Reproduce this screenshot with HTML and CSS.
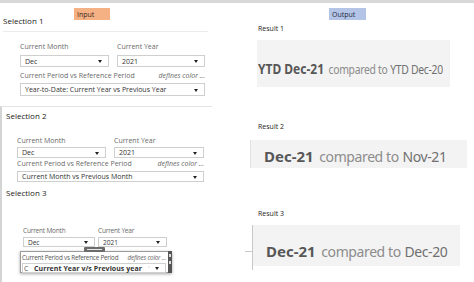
FILE: index.html
```html
<!DOCTYPE html>
<html>
<head>
<meta charset="utf-8">
<link rel="stylesheet" href="styles.css">
</head>
<body>
<div class="page">
  <div class="input-col">
    <div class="col-head"><span class="tag tag-input">Input</span></div>

    <div class="sel-title t1">Selection 1</div>
    <div class="rule-short"></div>
    <div class="fields f1">
      <div class="field">
        <div class="lbl">Current Month</div>
        <div class="dd"><span>Dec</span></div>
      </div>
      <div class="field">
        <div class="lbl">Current Year</div>
        <div class="dd"><span>2021</span></div>
      </div>
      <div class="field wide">
        <div class="lbl lbl-row"><span>Current Period vs Reference Period</span><em>defines color ...</em></div>
        <div class="dd"><span>Year-to-Date: Current Year vs Previous Year</span></div>
      </div>
    </div>

    <div class="lower">
      <div class="sel-title t2">Selection 2</div>
      <div class="fields f2">
        <div class="field">
          <div class="lbl">Current Month</div>
          <div class="dd"><span>Dec</span></div>
        </div>
        <div class="field">
          <div class="lbl">Current Year</div>
          <div class="dd"><span>2021</span></div>
        </div>
        <div class="field wide">
          <div class="lbl lbl-row"><span>Current Period vs Reference Period</span><em>defines color ...</em></div>
          <div class="dd"><span>Current Month vs Previous Month</span></div>
        </div>
      </div>

      <div class="sel-title t3">Selection 3</div>
      <div class="fields f3">
        <div class="field">
          <div class="lbl">Current Month</div>
          <div class="dd"><span>Dec</span></div>
        </div>
        <div class="field">
          <div class="lbl">Current Year</div>
          <div class="dd"><span>2021</span></div>
        </div>
      </div>
      <div class="handle"></div>
      <div class="popup">
        <div class="popup-main">
          <div class="lbl lbl-row pop-lbl"><span>Current Period vs Reference Period</span><em>defines color ...</em></div>
          <div class="dd pop-dd"><span class="cut">C</span><b>Current Year v/s Previous year</b><span class="tick">'</span></div>
        </div>
        <div class="popup-strip"><i></i><i></i></div>
      </div>
    </div>
  </div>

  <div class="output-col">
    <div class="col-head"><span class="tag tag-output">Output</span></div>

    <div class="res-lbl r1">Result 1</div>
    <div class="res-box b1"><span class="cond"><b>YTD Dec-21</b> <span class="lt">compared to</span> <span class="md">YTD Dec-20</span></span></div>

    <div class="res-lbl r2">Result 2</div>
    <div class="res-box b2"><b>Dec-21</b> <span class="lt">compared to</span> <span class="md">Nov-21</span></div>

    <div class="res-lbl r3">Result 3</div>
    <div class="res-box b3"><b>Dec-21</b> <span class="lt">compared to</span> <span class="md">Dec-20</span></div>
  </div>
</div>
</body>
</html>
```

FILE: styles.css
```css
* { box-sizing: border-box; }
html, body { margin: 0; padding: 0; }
body {
  width: 474px;
  height: 282px;
  overflow: hidden;
  background: linear-gradient(#d8d8d8 0 3px, #ffffff 3px);
  font-family: "Open Sans", "Noto Sans", sans-serif;
  color: #333;
}
.page { display: flex; }
.input-col { width: 237px; }
.output-col { flex: 1; min-width: 0; }

.col-head { height: 12px; }
.tag {
  display: inline-block;
  height: 12px;
  font-size: 7px;
  line-height: 13px;
  padding-left: 3px;
  color: #3a2a20;
}
.tag-input { margin-left: 74px; width: 36px; background: #f5b084; }
.tag-output { margin-left: 92px; width: 37px; background: #b3c4e6; color: #1d2a44; }

.sel-title {
  font-size: 8px;
  line-height: 12px;
  color: #222;
  padding-left: 3px;
}
.t1 { margin-top: 3px; }
.rule-short { margin: 4px 0 0 3px; width: 205px; height: 1px; background: #ececec; }

.fields {
  display: grid;
  grid-template-columns: 89px 88px;
  column-gap: 8px;
}
.field.wide { grid-column: 1 / 3; }
.lbl {
  font-size: 7px;
  line-height: 10px;
  color: #6a6a6a;
  white-space: nowrap;
}
.lbl-row { display: flex; justify-content: space-between; }
.lbl-row em { font-style: italic; color: #666; }
.dd {
  position: relative;
  border: 1px solid #cfcfcf;
  background: #fff;
  font-size: 7px;
  color: #333;
  padding-left: 4px;
  white-space: nowrap;
  display: flex;
  align-items: center;
}
.dd::after {
  content: "";
  position: absolute;
  right: 6px;
  top: 50%;
  margin-top: -1px;
  border-left: 2px solid transparent;
  border-right: 2px solid transparent;
  border-top: 3px solid #222;
}

.f1 { padding-left: 20px; margin-top: 10px; }
.f1 .dd { height: 12px; margin-top: 3px; }
.f1 .wide { margin-top: 4px; }
.f1 .wide .dd { height: 13px; margin-top: 2px; }

.lower {
  margin-top: 10px;
  width: 212px;
  border-top: 1px solid #e4e4e4;
  border-left: 2px solid #d4d4d4;
  padding-left: 1px;
  height: 176px;
}
.t2 { margin-top: 3px; }
.f2 { padding-left: 14px; margin-top: 14px; grid-template-columns: 89px 90px; }
.f2 .dd { height: 11px; margin-top: 1px; }
.f2 .wide { margin-top: 1px; }
.f2 .wide .dd { margin-top: 2px; }

.t3 { margin-top: 5px; }
.f3 { padding-left: 20px; margin-top: 27px; grid-template-columns: 72px 69px; column-gap: 3px; }
.f3 .lbl { font-size: 6.5px; letter-spacing: -0.2px; }
.f3 .dd { height: 10px; margin-top: 1px; font-size: 6.5px; }

.handle {
  margin-left: 81px;
  width: 21px;
  height: 5px;
  background: #6b6b6b;
  border-radius: 1px;
  position: relative;
}
.handle::after {
  content: "";
  position: absolute;
  left: 3px; right: 3px; top: 2px;
  height: 1px;
  background: #e8e8e8;
}
.popup {
  display: flex;
  margin-left: 17px;
  margin-top: -1px;
  width: 152px;
  height: 22px;
  box-shadow: 0 1px 3px rgba(0,0,0,0.35);
}
.popup-main {
  width: 148px;
  border: 1px solid #9a9a9a;
  border-right: none;
  background: #fff;
  padding: 1px 2px 0 1px;
}
.pop-lbl { font-size: 6.3px; line-height: 9px; letter-spacing: -0.2px; color: #555; }
.pop-dd { height: 10px; margin-top: 1px; padding-left: 1px; font-size: 7px; }
.pop-dd .cut { color: #555; width: 10px; }
.pop-dd b { color: #333; font-weight: 700; letter-spacing: 0.05px; }
.pop-dd .tick { color: #bbb; margin-left: 6px; }
.popup-strip {
  width: 4px;
  background: #555;
  display: flex;
  flex-direction: column;
  align-items: center;
  gap: 4px;
  padding-top: 3px;
}
.popup-strip i { width: 2px; height: 3px; background: #ddd; }

.res-lbl {
  font-size: 7px;
  line-height: 10px;
  color: #222;
  padding-left: 21px;
}
.r1 { margin-top: 12px; }
.r2 { margin-top: 35px; }
.r3 { margin-top: 41px; }
.res-box {
  background: #f3f3f3;
  font-family: "Noto Sans", "Open Sans", sans-serif;
  font-size: 14px;
  line-height: 20px;
  white-space: nowrap;
  color: #888;
}
.res-box b { font-size: 15px; font-weight: 700; color: #575757; margin-right: 2px; }
.res-box .lt { color: #8c8c8c; letter-spacing: -0.4px; }
.res-box .md { color: #707070; letter-spacing: -0.4px; }
.b1 { margin-top: 6px; margin-left: 20px; width: 193px; height: 47px; padding: 18px 0 0 1px; }
.b1 .lt, .b1 .md { font-size: 13px; }
.cond { display: inline-block; width: 236px; transform: scaleX(0.8); transform-origin: left center; }
.b2 { margin-top: 8px; margin-left: 13px; width: 217px; height: 28px; padding: 6px 0 0 13px; border-left: 1px solid #e2e2e2; }
.b3 { margin-top: 6px; margin-left: 15px; width: 208px; height: 41px; padding: 16px 0 0 13px; position: relative; border-left: 1px solid #c8c8c8; }
.b3::before {
  content: "";
  position: absolute;
  left: -8px; top: 26px;
  width: 7px; height: 1px;
  background: #c8c8c8;
}
.b3::after {
  content: "";
  position: absolute;
  left: -1px; top: 41px;
  width: 1px; height: 4px;
  background: #c8c8c8;
}
```
